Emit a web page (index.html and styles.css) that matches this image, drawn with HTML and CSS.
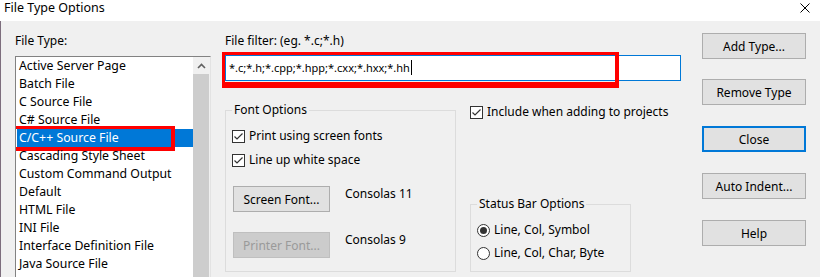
FILE: index.html
```html
<!DOCTYPE html>
<html>
<head>
    <title>File Type Options</title>
    <link rel="stylesheet" href="styles.css">
</head>
<body>
    <div class="titlebar">
        <span class="title">File Type Options</span>
        <svg class="close-x" width="10" height="10" viewBox="0 0 10 10">
            <path d="M0.5 0.5 L9.5 9.5 M9.5 0.5 L0.5 9.5" stroke="#000" stroke-width="1" fill="none"/>
        </svg>
    </div>

    <div class="dialog">
        <div class="left-col">
            <div class="label">File Type:</div>
            <div class="listbox">
                <div class="items">
                    <div class="item">Active Server Page</div>
                    <div class="item">Batch File</div>
                    <div class="item">C Source File</div>
                    <div class="item">C# Source File</div>
                    <div class="item selected">C/C++ Source File</div>
                    <div class="item">Cascading Style Sheet</div>
                    <div class="item">Custom Command Output</div>
                    <div class="item">Default</div>
                    <div class="item">HTML File</div>
                    <div class="item">INI File</div>
                    <div class="item">Interface Definition File</div>
                    <div class="item">Java Source File</div>
                </div>
                <div class="scrollbar">
                    <div class="scroll-up">
                        <svg width="9" height="6" viewBox="0 0 9 6">
                            <path d="M1 5 L4.5 1.5 L8 5" stroke="#606060" stroke-width="1.6" fill="none"/>
                        </svg>
                    </div>
                    <div class="scroll-thumb"></div>
                </div>
            </div>
        </div>

        <div class="mid-col">
            <div class="label">File filter: (eg. *.c;*.h)</div>
            <div class="filter-input">*.c;*.h;*.cpp;*.hpp;*.cxx;*.hxx;*.hh<span class="caret"></span></div>

            <div class="options-row">
                <fieldset class="group font-options">
                    <legend>Font Options</legend>
                    <div class="check-row">
                        <svg class="check" width="13" height="13" viewBox="0 0 13 13">
                            <rect x="0.5" y="0.5" width="12" height="12" fill="#fff" stroke="#333"/>
                            <path d="M2.5 6.5 L5 9 L10.5 3.5" stroke="#333" stroke-width="1.2" fill="none"/>
                        </svg>
                        <span>Print using screen fonts</span>
                    </div>
                    <div class="check-row">
                        <svg class="check" width="13" height="13" viewBox="0 0 13 13">
                            <rect x="0.5" y="0.5" width="12" height="12" fill="#fff" stroke="#333"/>
                            <path d="M2.5 6.5 L5 9 L10.5 3.5" stroke="#333" stroke-width="1.2" fill="none"/>
                        </svg>
                        <span>Line up white space</span>
                    </div>
                    <div class="font-row first">
                        <button class="btn font-btn">Screen Font...</button>
                        <span class="font-name">Consolas 11</span>
                    </div>
                    <div class="font-row">
                        <button class="btn font-btn" disabled>Printer Font...</button>
                        <span class="font-name">Consolas 9</span>
                    </div>
                </fieldset>

                <div class="side-options">
                    <div class="check-row include">
                        <svg class="check" width="13" height="13" viewBox="0 0 13 13">
                            <rect x="0.5" y="0.5" width="12" height="12" fill="#fff" stroke="#333"/>
                            <path d="M2.5 6.5 L5 9 L10.5 3.5" stroke="#333" stroke-width="1.2" fill="none"/>
                        </svg>
                        <span>Include when adding to projects</span>
                    </div>
                    <fieldset class="group status-options">
                        <legend>Status Bar Options</legend>
                        <div class="radio-row">
                            <svg width="13" height="13" viewBox="0 0 13 13">
                                <circle cx="6.5" cy="6.5" r="6" fill="#fff" stroke="#333"/>
                                <circle cx="6.5" cy="6.5" r="3.5" fill="#333"/>
                            </svg>
                            <span>Line, Col, Symbol</span>
                        </div>
                        <div class="radio-row">
                            <svg width="13" height="13" viewBox="0 0 13 13">
                                <circle cx="6.5" cy="6.5" r="6" fill="#fff" stroke="#333"/>
                            </svg>
                            <span>Line, Col, Char, Byte</span>
                        </div>
                    </fieldset>
                </div>
            </div>
        </div>

        <div class="right-col">
            <button class="btn add">Add Type...</button>
            <button class="btn">Remove Type</button>
            <button class="btn default">Close</button>
            <button class="btn">Auto Indent...</button>
            <button class="btn">Help</button>
        </div>
    </div>
</body>
</html>
```

FILE: styles.css
```css
body {
    margin: 0;
    width: 820px;
    height: 277px;
    overflow: hidden;
    font-family: "Noto Sans", "Noto Sans CJK SC", sans-serif;
    font-size: 12px;
    color: #000000;
    background-color: #f0f0f0;
}
.titlebar {
    height: 21px;
    background-color: #ffffff;
    display: flex;
    justify-content: space-between;
    align-items: flex-start;
    padding: 0 10px 0 4px;
}
.title {
    line-height: 16px;
    font-size: 12.5px;
}
.close-x {
    margin-top: 3px;
}
.dialog {
    display: flex;
    padding: 12px 14px 0 14px;
    border-left: 1px solid #7d6e7d;
    height: 256px;
    box-sizing: border-box;
    overflow: hidden;
}
.label {
    line-height: 16px;
    height: 16px;
    margin-bottom: 6px;
}
.left-col {
    width: 196px;
    display: flex;
    flex-direction: column;
}
.left-col .label {
    margin-bottom: 7px;
}
.listbox {
    flex: 1;
    display: flex;
    overflow: hidden;
    background-color: #ffffff;
    border: 1px solid #828282;
    border-right-color: #e3e3e3;
    border-bottom: none;
}
.items {
    width: 176px;
    padding-left: 1px;
}
.item {
    position: relative;
    height: 18px;
    line-height: 18px;
    padding-left: 2px;
    white-space: nowrap;
    font-size: 12.3px;
}
.item.selected {
    background-color: #0078d7;
    color: #ffffff;
}
.item.selected::after {
    content: "";
    position: absolute;
    left: -5px;
    top: -3px;
    right: 18px;
    bottom: -4px;
    border: 4px solid #ff0000;
    border-top-width: 3px;
}
.scrollbar {
    width: 17px;
    display: flex;
    flex-direction: column;
    background-color: #f0f0f0;
}
.scroll-up {
    height: 17px;
    display: flex;
    align-items: center;
    justify-content: center;
}
.scroll-thumb {
    flex: 1;
    background-color: #cdcdcd;
    margin-right: 1px;
}
.mid-col {
    width: 456px;
    margin-left: 14px;
}
.filter-input {
    position: relative;
    height: 26px;
    line-height: 24px;
    box-sizing: border-box;
    border: 1px solid #0078d7;
    background-color: #ffffff;
    padding-left: 3px;
    font-size: 11px;
}
.caret {
    display: inline-block;
    width: 1px;
    height: 15px;
    background-color: #000000;
    vertical-align: -3px;
    margin-left: 1px;
}
.filter-input::after {
    content: "";
    position: absolute;
    left: -4px;
    top: -4px;
    right: 61px;
    bottom: -8px;
    border: 4px solid #ff0000;
    border-left-width: 3px;
    border-top-width: 3px;
    border-bottom-width: 6px;
}
.options-row {
    display: flex;
    margin-top: 21px;
    gap: 14px;
}
.group {
    margin: 0;
    padding: 0 6px;
    border: 1px solid #dcdcdc;
    min-width: 0;
}
.group legend {
    padding: 0 2px;
    margin-left: 0;
    line-height: 16px;
}
.font-options {
    width: 231px;
    flex-shrink: 0;
    box-sizing: border-box;
    padding-top: 10px;
    padding-bottom: 13px;
}
.check-row, .radio-row {
    display: flex;
    align-items: center;
    gap: 4px;
    height: 16px;
    line-height: 16px;
    white-space: nowrap;
}
.check-row svg, .radio-row svg {
    flex-shrink: 0;
}
.check-row + .check-row {
    margin-top: 8px;
}
.font-row {
    display: flex;
    align-items: flex-start;
    padding-left: 1px;
    margin-top: 20px;
}
.font-row.first {
    margin-top: 18px;
}
.font-name {
    margin-left: 15px;
    line-height: 16px;
}
.btn {
    height: 26px;
    border: 1px solid #adadad;
    background-color: #e1e1e1;
    font-family: inherit;
    font-size: 12px;
    color: #000000;
    padding: 0;
    box-sizing: border-box;
}
.btn:disabled {
    background-color: #cccccc;
    border-color: #bfbfbf;
    color: #9a9a9a;
}
.font-btn {
    width: 97px;
}
.side-options {
    width: 161px;
    flex-shrink: 0;
    display: flex;
    flex-direction: column;
    justify-content: space-between;
}
.include {
    margin-top: 2px;
}
.status-options {
    padding-top: 10px;
    padding-bottom: 10px;
}
.radio-row + .radio-row {
    margin-top: 7px;
}
.right-col {
    margin-left: 21px;
    width: 104px;
    display: flex;
    flex-direction: column;
    gap: 21px;
}
.btn.add {
    margin-bottom: -1px;
}
.btn.default {
    border: 2px solid #0078d7;
}
```
